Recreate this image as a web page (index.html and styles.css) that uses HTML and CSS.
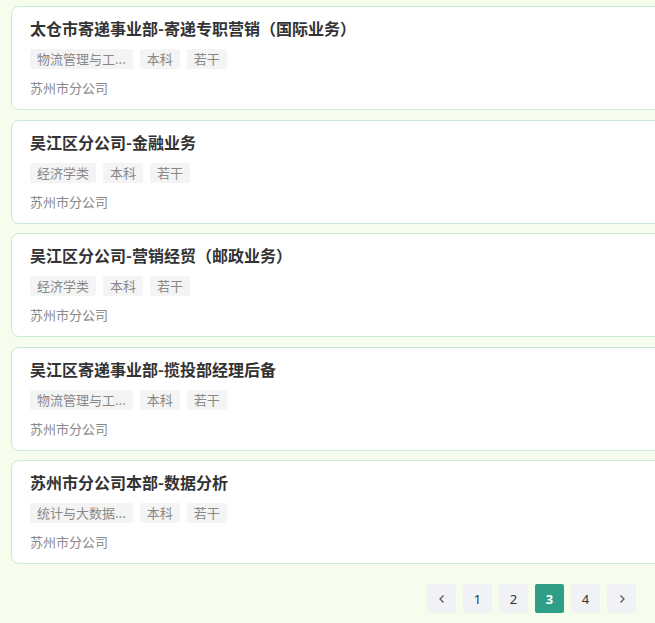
FILE: index.html
```html
<!DOCTYPE html>
<html lang="zh-CN">
<head>
<meta charset="utf-8">
<title>岗位列表</title>
<link rel="stylesheet" href="styles.css">
</head>
<body>
<div class="page">
  <ul class="job-list">
    <li class="job-card">
      <h3 class="job-title">太仓市寄递事业部-寄递专职营销（国际业务）</h3>
      <div class="job-tags">
        <span class="tag">物流管理与工...</span>
        <span class="tag">本科</span>
        <span class="tag">若干</span>
      </div>
      <p class="job-company">苏州市分公司</p>
    </li>
    <li class="job-card">
      <h3 class="job-title">吴江区分公司-金融业务</h3>
      <div class="job-tags">
        <span class="tag">经济学类</span>
        <span class="tag">本科</span>
        <span class="tag">若干</span>
      </div>
      <p class="job-company">苏州市分公司</p>
    </li>
    <li class="job-card">
      <h3 class="job-title">吴江区分公司-营销经贸（邮政业务）</h3>
      <div class="job-tags">
        <span class="tag">经济学类</span>
        <span class="tag">本科</span>
        <span class="tag">若干</span>
      </div>
      <p class="job-company">苏州市分公司</p>
    </li>
    <li class="job-card">
      <h3 class="job-title">吴江区寄递事业部-揽投部经理后备</h3>
      <div class="job-tags">
        <span class="tag">物流管理与工...</span>
        <span class="tag">本科</span>
        <span class="tag">若干</span>
      </div>
      <p class="job-company">苏州市分公司</p>
    </li>
    <li class="job-card">
      <h3 class="job-title">苏州市分公司本部-数据分析</h3>
      <div class="job-tags">
        <span class="tag">统计与大数据...</span>
        <span class="tag">本科</span>
        <span class="tag">若干</span>
      </div>
      <p class="job-company">苏州市分公司</p>
    </li>
  </ul>
  <nav class="pager">
    <button class="pager-btn pager-arrow" aria-label="上一页">
      <svg width="10" height="10" viewBox="0 0 10 10"><path d="M6.5 1.5 L3 5 L6.5 8.5" fill="none" stroke="#555" stroke-width="1.2"/></svg>
    </button>
    <button class="pager-btn">1</button>
    <button class="pager-btn">2</button>
    <button class="pager-btn is-active">3</button>
    <button class="pager-btn">4</button>
    <button class="pager-btn pager-arrow" aria-label="下一页">
      <svg width="10" height="10" viewBox="0 0 10 10"><path d="M3.5 1.5 L7 5 L3.5 8.5" fill="none" stroke="#555" stroke-width="1.2"/></svg>
    </button>
  </nav>
</div>
</body>
</html>
```
FILE: styles.css
```css
html, body {
  margin: 0;
  padding: 0;
  background: #f6fdec;
  overflow: hidden;
}

body {
  font-family: "Noto Sans CJK SC", "Noto Sans", sans-serif;
  color: #333;
}

.page {
  padding: 6px 0 0 11px;
}

.job-list {
  list-style: none;
  margin: 0;
  padding: 0;
  width: 680px;
  display: flex;
  flex-direction: column;
  gap: 9.5px;
}

.job-card {
  box-sizing: border-box;
  height: 104px;
  background: #fff;
  border: 1px solid #c6ebd9;
  border-radius: 8px;
  padding: 9px 18px 0;
}

.job-title {
  margin: 0;
  font-size: 16px;
  font-weight: 700;
  line-height: 24px;
  color: #333;
  white-space: nowrap;
}

.job-tags {
  display: flex;
  gap: 7px;
  margin-top: 9px;
}

.tag {
  display: inline-block;
  height: 20px;
  line-height: 20px;
  padding: 0 7px;
  font-size: 13px;
  color: #888;
  background: #f4f4f4;
  border-radius: 2px;
  white-space: nowrap;
}

.job-company {
  margin: 9px 0 0;
  font-size: 13px;
  line-height: 20px;
  color: #888;
}

.pager {
  display: flex;
  justify-content: flex-end;
  gap: 7px;
  margin-top: 20px;
  padding-right: 19px;
  margin-left: -11px;
}

.pager-btn {
  width: 29px;
  height: 29px;
  padding: 0;
  border: none;
  border-radius: 2px;
  background: #f0f2f5;
  color: #333;
  font-family: "Noto Sans", sans-serif;
  font-size: 13px;
  display: flex;
  align-items: center;
  justify-content: center;
}

.pager-btn.is-active {
  background: #2e9f86;
  color: #fff;
  font-weight: 700;
}
```
